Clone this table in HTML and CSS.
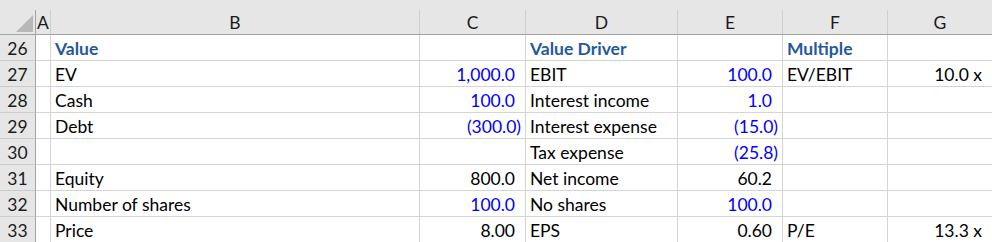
FILE: index.html
```html
<!DOCTYPE html>
<html>
<head>
<meta charset="utf-8">
<link rel="stylesheet" href="styles.css">
</head>
<body>
<div class="sheet">
  <div class="hdr corner"><div class="hin"><svg class="tri" width="17" height="17" viewBox="0 0 17 17"><polygon points="17,0 17,17 0,17" fill="#b7b7b7"/></svg></div></div>
  <div class="hdr"><div class="hin">A</div></div>
  <div class="hdr"><div class="hin">B</div></div>
  <div class="hdr"><div class="hin">C</div></div>
  <div class="hdr"><div class="hin">D</div></div>
  <div class="hdr"><div class="hin">E</div></div>
  <div class="hdr"><div class="hin">F</div></div>
  <div class="hdr last"><div class="hin">G</div></div>

  <div class="rh">26</div><div class="c"></div><div class="c t head">Value</div><div class="c n"></div><div class="c t head">Value Driver</div><div class="c n"></div><div class="c t head">Multiple</div><div class="c n"></div>
  <div class="rh">27</div><div class="c"></div><div class="c t">EV</div><div class="c n in pos">1,000.0</div><div class="c t">EBIT</div><div class="c n in pos">100.0</div><div class="c t">EV/EBIT</div><div class="c n pos">10.0 x</div>
  <div class="rh">28</div><div class="c"></div><div class="c t">Cash</div><div class="c n in pos">100.0</div><div class="c t">Interest income</div><div class="c n in pos">1.0</div><div class="c t"></div><div class="c n"></div>
  <div class="rh">29</div><div class="c"></div><div class="c t">Debt</div><div class="c n in">(300.0)</div><div class="c t">Interest expense</div><div class="c n in">(15.0)</div><div class="c t"></div><div class="c n"></div>
  <div class="rh">30</div><div class="c"></div><div class="c t"></div><div class="c n"></div><div class="c t">Tax expense</div><div class="c n in">(25.8)</div><div class="c t"></div><div class="c n"></div>
  <div class="rh">31</div><div class="c"></div><div class="c t">Equity</div><div class="c n pos">800.0</div><div class="c t">Net income</div><div class="c n pos">60.2</div><div class="c t"></div><div class="c n"></div>
  <div class="rh">32</div><div class="c"></div><div class="c t">Number of shares</div><div class="c n in pos">100.0</div><div class="c t">No shares</div><div class="c n in pos">100.0</div><div class="c t"></div><div class="c n"></div>
  <div class="rh">33</div><div class="c"></div><div class="c t">Price</div><div class="c n pos">8.00</div><div class="c t">EPS</div><div class="c n pos">0.60</div><div class="c t">P/E</div><div class="c n pos">13.3 x</div>
</div>
</body>
</html>
```
FILE: styles.css
```css
html, body {
  margin: 0;
  padding: 0;
  background: #ffffff;
}
.sheet {
  display: grid;
  grid-template-columns: 36px 15px 369px 106px 152px 105px 105px 105px;
  grid-template-rows: 35px repeat(8, 26px);
  font-family: Lato, "Liberation Sans", sans-serif;
  font-size: 17.5px;
  color: #000;
  width: 993px;
}
.hdr {
  background: #e6e6e6;
  border-bottom: 1px solid #a3a3a3;
  padding-top: 10px;
  display: flex;
  box-sizing: border-box;
}
.hin {
  flex: 1;
  border-right: 1px solid #cfcfcf;
  display: flex;
  align-items: center;
  justify-content: center;
  color: #1b1b1b;
  padding-top: 1px;
}
.corner .hin {
  border-right: 1px solid #a3a3a3;
  align-items: flex-end;
  justify-content: flex-end;
  padding: 0 2px 2px 0;
}
.tri { display: block; }
.rh {
  background: #e6e6e6;
  border-right: 1px solid #a3a3a3;
  border-bottom: 1px solid #cacaca;
  display: flex;
  align-items: center;
  justify-content: center;
  color: #1b1b1b;
  box-sizing: border-box;
  padding-top: 2px;
}
.c {
  border-right: 1px solid #d4d4d4;
  border-bottom: 1px solid #d4d4d4;
  box-sizing: border-box;
  display: flex;
  align-items: center;
  white-space: nowrap;
  overflow: hidden;
  padding-top: 2px;
}
.t { padding-left: 4px; }
.n { justify-content: flex-end; padding-right: 4px; }
.n.pos { padding-right: 10px; }
.in { color: #0000ff; }
.head { font-weight: 700; color: #1f5a9c; }
```
